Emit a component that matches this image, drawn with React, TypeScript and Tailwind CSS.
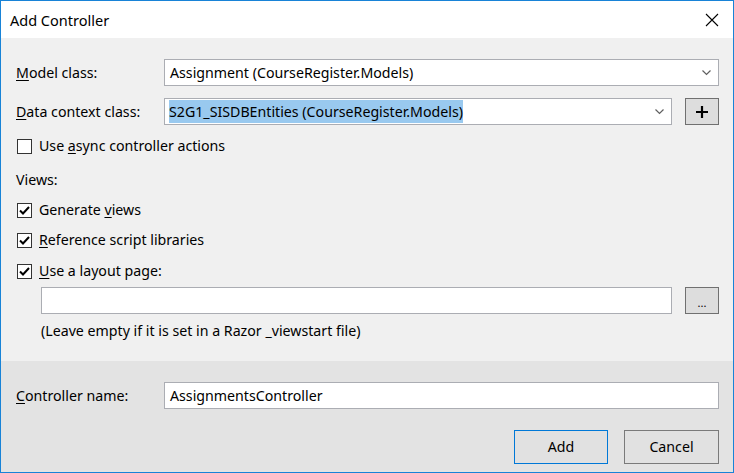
import React from "react";

const font = { fontFamily: '"Noto Sans", "Open Sans", sans-serif' };

function U({ children }: { children: React.ReactNode }) {
  return <span className="underline underline-offset-2 decoration-1">{children}</span>;
}

function Chevron() {
  return (
    <svg width="9" height="6" viewBox="0 0 9 6" className="shrink-0">
      <path d="M0.5 0.5 L4.5 4.5 L8.5 0.5" fill="none" stroke="#606060" strokeWidth="1.2" />
    </svg>
  );
}

function Check({ checked }: { checked: boolean }) {
  return (
    <div className="w-[15px] h-[15px] border border-[#333333] bg-white flex items-center justify-center shrink-0">
      {checked && (
        <svg width="11" height="9" viewBox="0 0 11 9">
          <path d="M1 4.5 L4 7.5 L10 1" fill="none" stroke="#000" strokeWidth="2" />
        </svg>
      )}
    </div>
  );
}

export default function App() {
  return (
    <div
      className="w-[734px] h-[473px] border border-[#1883d7] flex flex-col text-[14.2px] text-black leading-none overflow-hidden"
      style={font}
    >
      <div className="h-[37px] bg-white flex items-center justify-between pl-[9px] pr-[14px] shrink-0">
        <span className="text-[14.5px] pt-[1px]">Add Controller</span>
        <svg width="14" height="14" viewBox="0 0 14 14">
          <path d="M1 1 L13 13 M13 1 L1 13" stroke="#000" strokeWidth="1.1" />
        </svg>
      </div>

      <div className="h-[323px] bg-[#f0f0f0] flex flex-col pl-[15px] pr-[14px] pt-[21px] shrink-0">
        <div className="h-[27px] flex items-center">
          <div className="w-[148px] pt-[1px]">
            <U>M</U>odel class:
          </div>
          <div className="flex-1 h-[27px] bg-white border border-[#abadb3] flex items-center pl-[5px] pr-[7px] justify-between">
            <span className="pt-[1px]">Assignment (CourseRegister.Models)</span>
            <Chevron />
          </div>
        </div>

        <div className="h-[27px] flex items-center mt-[12px]">
          <div className="w-[148px] pt-[1px]">
            <U>D</U>ata context class:
          </div>
          <div className="flex-1 h-[27px] bg-white border border-[#abadb3] flex items-center pl-[4px] pr-[7px] justify-between">
            <span className="bg-[#99c9ef] pt-[5px] pb-[3px]">S2G1_SISDBEntities (CourseRegister.Models)</span>
            <Chevron />
          </div>
          <div className="w-[34px] h-[27px] ml-[13px] bg-[#dddddd] border border-[#707070] flex items-center justify-center">
            <svg width="12" height="12" viewBox="0 0 12 12">
              <path d="M6 0 V12 M0 6 H12" stroke="#000" strokeWidth="2.2" />
            </svg>
          </div>
        </div>

        <div className="h-[20px] flex items-center mt-[11px] pl-[1px] gap-[7px]">
          <Check checked={false} />
          <span>
            Use <U>a</U>sync controller actions
          </span>
        </div>

        <div className="h-[20px] flex items-center mt-[14px]">Views:</div>

        <div className="h-[20px] flex items-center mt-[10px] pl-[1px] gap-[7px]">
          <Check checked />
          <span>
            Generate <U>v</U>iews
          </span>
        </div>

        <div className="h-[20px] flex items-center mt-[10px] pl-[1px] gap-[7px]">
          <Check checked />
          <span>
            <U>R</U>eference script libraries
          </span>
        </div>

        <div className="h-[20px] flex items-center mt-[11px] pl-[1px] gap-[7px]">
          <Check checked />
          <span>
            <U>U</U>se a layout page:
          </span>
        </div>

        <div className="h-[27px] flex items-center mt-[6px] pl-[25px]">
          <div className="flex-1 h-[27px] bg-white border border-[#abadb3]" />
          <div className="w-[34px] h-[27px] ml-[13px] bg-[#dddddd] border border-[#707070] flex items-end justify-center pb-[5px] text-[11px]">
            ...
          </div>
        </div>

        <div className="h-[20px] flex items-center mt-[7px] pl-[25px]">
          (Leave empty if it is set in a Razor _viewstart file)
        </div>
      </div>

      <div className="flex-1 bg-[#e3e3e3] flex flex-col pl-[15px] pr-[14px] pt-[21px]">
        <div className="h-[27px] flex items-center">
          <div className="w-[148px] pt-[1px]">
            <U>C</U>ontroller name:
          </div>
          <div className="flex-1 h-[27px] bg-white border border-[#abadb3] flex items-center pl-[5px] pt-[1px]">
            AssignmentsController
          </div>
        </div>
        <div className="flex justify-end mt-[21px] gap-[16px]">
          <div className="w-[94px] h-[34px] bg-[#e1e1e1] border border-[#0078d7] flex items-center justify-center">
            Add
          </div>
          <div className="w-[95px] h-[34px] bg-[#e1e1e1] border border-[#7a7a7a] flex items-center justify-center">
            Cancel
          </div>
        </div>
      </div>
    </div>
  );
}
